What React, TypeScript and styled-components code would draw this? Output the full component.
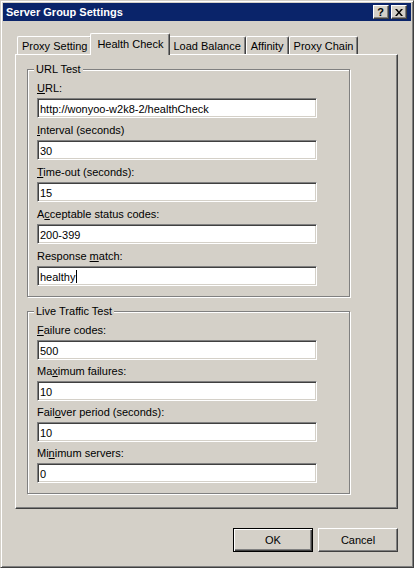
import React from "react"
import styled, { createGlobalStyle } from "styled-components"

const GlobalStyle = createGlobalStyle`
  html, body {
    margin: 0;
    padding: 0;
    background: #d4d0c8;
  }
`

type FieldDef = { label: React.ReactNode; value: string; focused?: boolean }

const urlFields: FieldDef[] = [
  { label: <><u>U</u>RL:</>, value: "http://wonyoo-w2k8-2/healthCheck" },
  { label: <><u>I</u>nterval (seconds)</>, value: "30" },
  { label: <><u>T</u>ime-out (seconds):</>, value: "15" },
  { label: <>A<u>c</u>ceptable status codes:</>, value: "200-399" },
  { label: <>Response <u>m</u>atch:</>, value: "healthy", focused: true },
]

const trafficFields: FieldDef[] = [
  { label: <><u>F</u>ailure codes:</>, value: "500" },
  { label: <>Ma<u>x</u>imum failures:</>, value: "10" },
  { label: <>Fail<u>o</u>ver period (seconds):</>, value: "10" },
  { label: <>Mi<u>n</u>imum servers:</>, value: "0" },
]

const tabs = ["Proxy Setting", "Health Check", "Load Balance", "Affinity", "Proxy Chain"]

const FieldGroup = ({ title, fields, gap }: { title: string; fields: FieldDef[]; gap: number }) => (
  <Group $gap={gap}>
    <Legend>{title}</Legend>
    {fields.map((f, i) => (
      <Row key={i}>
        <Label>{f.label}</Label>
        <Field>
          {f.value}
          {f.focused && <Caret />}
        </Field>
      </Row>
    ))}
  </Group>
)

const App = () => {
  return (
    <Window>
      <GlobalStyle />
      <TitleBar>
        <Title>Server Group Settings</Title>
        <TitleButton>?</TitleButton>
        <TitleButton>
          <svg width="8" height="7" viewBox="0 0 8 7">
            <path d="M0 0h2l2 2.5L6 0h2L5 3.5 8 7H6L4 4.5 2 7H0l3-3.5z" fill="#000" />
          </svg>
        </TitleButton>
      </TitleBar>
      <Client>
        <TabStrip>
          {tabs.map((t) => (
            <Tab key={t} $active={t === "Health Check"}>
              {t}
            </Tab>
          ))}
        </TabStrip>
        <Panel>
          <FieldGroup title="URL Test" fields={urlFields} gap={5} />
          <FieldGroup title="Live Traffic Test" fields={trafficFields} gap={4} />
        </Panel>
        <ButtonRow>
          <Button $default>OK</Button>
          <Button>Cancel</Button>
        </ButtonRow>
      </Client>
    </Window>
  )
}

const Window = styled.div`
  width: 414px;
  height: 568px;
  box-sizing: border-box;
  border: 1px solid;
  border-color: #d4d0c8 #404040 #404040 #d4d0c8;
  box-shadow: inset 1px 1px #fff, inset -1px -1px #808080;
  padding: 2px;
  background: #d4d0c8;
  display: flex;
  flex-direction: column;
  font-family: "Liberation Sans", Arial, sans-serif;
  font-size: 11px;
  color: #000;
`

const TitleBar = styled.div`
  height: 18px;
  background: #0a246a;
  display: flex;
  align-items: center;
  padding: 0 4px 0 3px;
  gap: 2px;
`

const Title = styled.div`
  flex: 1;
  color: #fff;
  font-weight: bold;
  font-size: 11px;
`

const TitleButton = styled.div`
  width: 16px;
  height: 14px;
  box-sizing: border-box;
  background: #d4d0c8;
  border: 1px solid;
  border-color: #fff #404040 #404040 #fff;
  box-shadow: inset -1px -1px #808080;
  display: flex;
  align-items: center;
  justify-content: center;
  font-weight: bold;
  font-size: 11px;
  line-height: 1;
  padding-right: 1px;
`

const Client = styled.div`
  flex: 1;
  display: flex;
  flex-direction: column;
  padding: 12px 13px 0 12px;
`

const TabStrip = styled.div`
  height: 21px;
  display: flex;
  align-items: flex-end;
  padding-left: 2px;
`

const Tab = styled.div<{ $active?: boolean }>`
  position: relative;
  z-index: ${(p) => (p.$active ? 1 : 0)};
  box-sizing: border-box;
  height: ${(p) => (p.$active ? "22px" : "18px")};
  margin: ${(p) => (p.$active ? "0 -2px -1px" : "0")};
  padding: ${(p) => (p.$active ? "0 6px 2px" : "0 4px")};
  background: #d4d0c8;
  border-top: 1px solid #fff;
  border-left: 1px solid #fff;
  border-right: 1px solid #404040;
  box-shadow: inset -1px 0 #808080;
  border-radius: 2px 2px 0 0;
  display: flex;
  align-items: center;
  white-space: nowrap;
`

const Panel = styled.div`
  height: 455px;
  box-sizing: border-box;
  border: 1px solid;
  border-color: #fff #404040 #404040 #fff;
  box-shadow: inset -1px -1px #808080;
  padding: 14px 0 0 11px;
  display: flex;
  flex-direction: column;
  gap: 14px;
`

const Group = styled.div<{ $gap: number }>`
  position: relative;
  width: 323px;
  box-sizing: border-box;
  border: 1px solid #808080;
  box-shadow: inset 1px 1px #fff, 1px 1px #fff;
  padding: 11px 0 10px 9px;
  display: flex;
  flex-direction: column;
  gap: ${(p) => p.$gap}px;
`

const Legend = styled.div`
  position: absolute;
  top: -7px;
  left: 6px;
  padding: 0 2px;
  line-height: 13px;
  background: #d4d0c8;
`

const Row = styled.div`
  display: flex;
  flex-direction: column;
`

const Label = styled.div`
  height: 14px;
  line-height: 14px;
  margin-bottom: 3px;
`

const Field = styled.div`
  width: 280px;
  height: 20px;
  box-sizing: border-box;
  background: #fff;
  border: 1px solid;
  border-color: #808080 #fff #fff #808080;
  box-shadow: inset 1px 1px #404040, inset -1px -1px #d4d0c8;
  padding: 1px 2px 0;
  display: flex;
  align-items: center;
`

const Caret = styled.span`
  display: inline-block;
  width: 1px;
  height: 13px;
  background: #000;
  margin-left: 1px;
`

const ButtonRow = styled.div`
  display: flex;
  justify-content: flex-end;
  gap: 5px;
  margin-top: 19px;
`

const Button = styled.div<{ $default?: boolean }>`
  width: 80px;
  height: 24px;
  box-sizing: border-box;
  display: flex;
  align-items: center;
  justify-content: center;
  border: 1px solid;
  border-color: ${(p) => (p.$default ? "#000" : "#fff #404040 #404040 #fff")};
  box-shadow: ${(p) =>
    p.$default
      ? "inset 1px 1px #fff, inset -1px -1px #404040, inset -2px -2px #808080"
      : "inset -1px -1px #808080"};
`

export default App
